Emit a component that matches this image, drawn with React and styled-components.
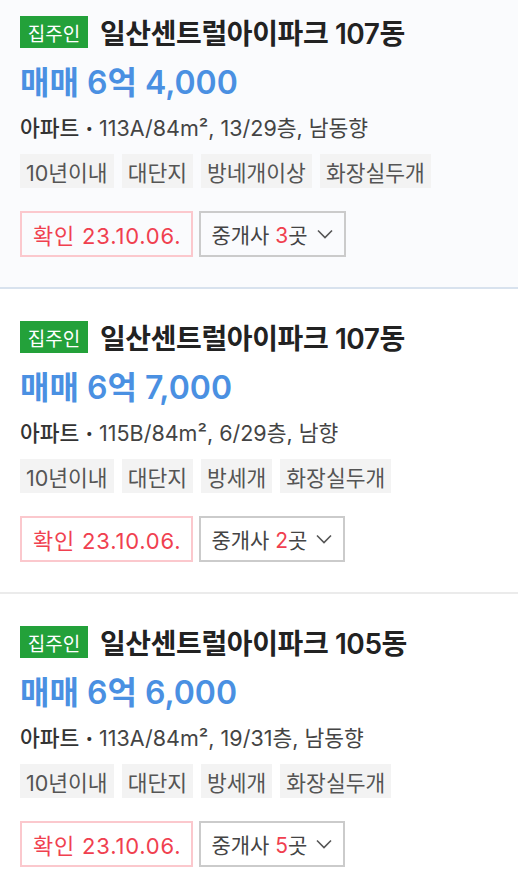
import styled, { createGlobalStyle } from 'styled-components'

const GlobalStyle = createGlobalStyle`
  body {
    margin: 0;
    background: #fff;
    font-family: Inter, 'Noto Sans CJK KR', sans-serif;
  }
`

const listings = [
    {
        title: '일산센트럴아이파크 107동',
        price: '매매 6억 4,000',
        spec: '113A/84m², 13/29층, 남동향',
        tags: ['10년이내', '대단지', '방네개이상', '화장실두개'],
        date: '23.10.06.',
        agents: 3,
        active: true,
    },
    {
        title: '일산센트럴아이파크 107동',
        price: '매매 6억 7,000',
        spec: '115B/84m², 6/29층, 남향',
        tags: ['10년이내', '대단지', '방세개', '화장실두개'],
        date: '23.10.06.',
        agents: 2,
    },
    {
        title: '일산센트럴아이파크 105동',
        price: '매매 6억 6,000',
        spec: '113A/84m², 19/31층, 남동향',
        tags: ['10년이내', '대단지', '방세개', '화장실두개'],
        date: '23.10.06.',
        agents: 5,
    },
]

const Chevron = () => (
    <svg width='18' height='10' viewBox='0 0 18 10' fill='none'>
        <polyline points='2,1.5 9,8.5 16,1.5' stroke='#555' strokeWidth='1.6' />
    </svg>
)

const App = () => {
    return (
        <>
            <GlobalStyle />
            <List>
                {listings.map((item, index) => (
                    <Item key={index} $active={item.active} $first={index === 0}>
                        <Header>
                            <Badge>집주인</Badge>
                            <Title>{item.title}</Title>
                        </Header>
                        <Price>{item.price}</Price>
                        <Spec>
                            <strong>아파트</strong> <Dot>·</Dot> {item.spec}
                        </Spec>
                        <Tags>
                            {item.tags.map((tag) => (
                                <Tag key={tag}>{tag}</Tag>
                            ))}
                        </Tags>
                        <Actions>
                            <Confirmed>확인 {item.date}</Confirmed>
                            <AgentButton>
                                <span>
                                    중개사 <Count>{item.agents}</Count>곳
                                </span>
                                <Chevron />
                            </AgentButton>
                        </Actions>
                    </Item>
                ))}
            </List>
        </>
    )
}

export default App

const List = styled.div`
  width: 518px;
`

const Item = styled.div`
  padding: ${(p) => (p.$first ? '16px' : '32px')} 0 30px 20px;
  background: ${(p) => (p.$active ? '#fafbfd' : '#fff')};
  border-bottom: 2px solid ${(p) => (p.$active ? '#d8e2ee' : '#ebebeb')};

  &:last-child {
    border-bottom: none;
  }
`

const Header = styled.div`
  display: flex;
  align-items: center;
  gap: 12px;
  height: 32px;
`

const Badge = styled.span`
  display: flex;
  align-items: center;
  justify-content: center;
  height: 32px;
  width: 68px;
  background: #23a13a;
  color: #fff;
  font-size: 19px;
`

const Title = styled.h2`
  margin: 0;
  font-size: 28px;
  font-weight: 600;
  color: #222;
  letter-spacing: -0.4px;
`

const Price = styled.div`
  margin-top: 15px;
  line-height: 40px;
  font-size: 32px;
  font-weight: 600;
  color: #4a90e2;
`

const Spec = styled.div`
  margin-top: 10px;
  line-height: 30px;
  font-size: 21.5px;
  color: #444;

  strong {
    font-weight: 500;
    color: #333;
  }
`

const Dot = styled.b`
  font-weight: 800;
  color: #333;
`

const Tags = styled.div`
  display: flex;
  gap: 8px;
  margin-top: 11px;
`

const Tag = styled.span`
  display: flex;
  align-items: center;
  height: 34px;
  padding: 0 6px;
  background: #f3f3f3;
  color: #555;
  font-size: 21.5px;
`

const Actions = styled.div`
  display: flex;
  gap: 6px;
  margin-top: 23px;
`

const Confirmed = styled.div`
  display: flex;
  align-items: center;
  box-sizing: border-box;
  height: 46px;
  padding: 0 10px 0 11px;
  border: 2px solid #fbc8cd;
  color: #f0404f;
  font-size: 22px;
  letter-spacing: 0.8px;
`

const AgentButton = styled.div`
  display: flex;
  align-items: center;
  gap: 8px;
  box-sizing: border-box;
  height: 46px;
  padding: 0 10px;
  border: 2px solid #cbcbcb;
  color: #444;
  font-size: 21px;
`

const Count = styled.span`
  color: #f0404f;
`
